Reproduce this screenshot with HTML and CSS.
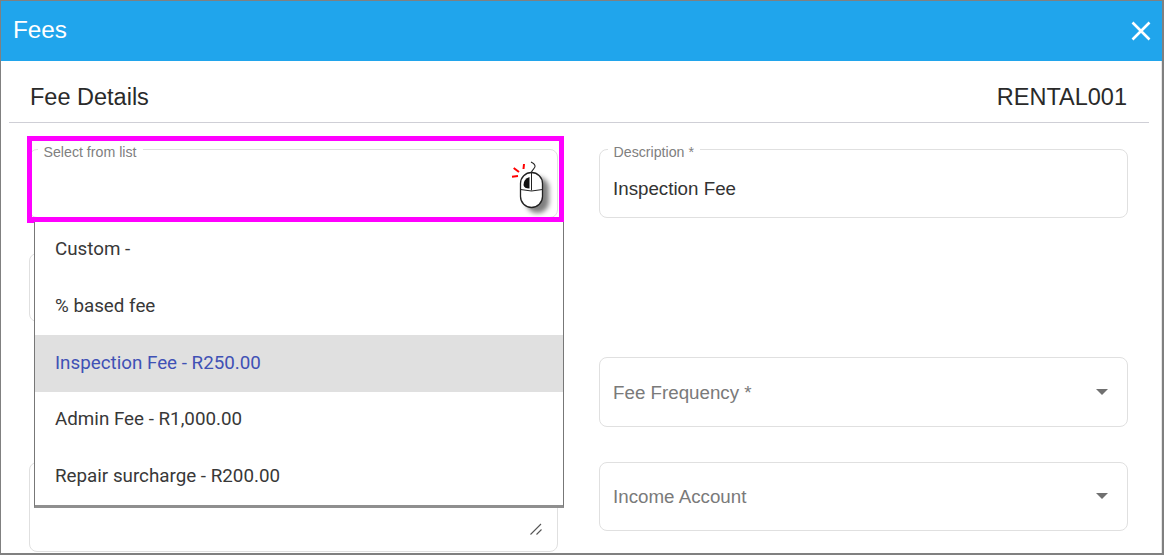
FILE: index.html
```html
<!DOCTYPE html>
<html lang="en">
<head>
<meta charset="utf-8">
<title>Fees</title>
<link rel="stylesheet" href="styles.css">
</head>
<body>
<div class="window">
  <header class="titlebar">
    <h1 class="title">Fees</h1>
    <svg class="close" width="20" height="20" viewBox="0 0 20 20" aria-label="Close"><path d="M1.5 1.5 18.5 18.5M18.5 1.5 1.5 18.5" stroke="#fff" stroke-width="2.6" fill="none"/></svg>
  </header>
  <main class="content">
    <div class="section-head">
      <h2 class="section-title">Fee Details</h2>
      <span class="section-title">RENTAL001</span>
    </div>
    <div class="form">
      <div class="field"><span class="legend">Select from list</span></div>
      <div class="field"><span class="legend">Description *</span><span class="value">Inspection Fee</span></div>
      <div class="field"></div>
      <div class="spacer"></div>
      <div class="spacer"></div>
      <div class="field select freq"><span class="placeholder">Fee Frequency *</span><span class="arrow"></span></div>
      <div class="field textarea">
        <svg class="grip" width="14" height="14" viewBox="0 0 14 14"><path d="M1.5 12.5 12 2M7.5 12.5 12.5 7.500" stroke="#555" stroke-width="1.1" fill="none"/></svg>
      </div>
      <div class="field select income"><span class="placeholder">Income Account</span><span class="arrow"></span></div>
    </div>
  </main>

  <div class="highlight"></div>

  <ul class="menu">
    <li class="option">Custom -</li>
    <li class="option">% based fee</li>
    <li class="option selected">Inspection Fee - R250.00</li>
    <li class="option">Admin Fee - R1,000.00</li>
    <li class="option">Repair surcharge - R200.00</li>
  </ul>

  <svg class="mouse" width="48" height="60" viewBox="0 0 48 60">
    <defs>
      <filter id="soft" x="-50%" y="-50%" width="200%" height="200%"><feGaussianBlur stdDeviation="2.6"/></filter>
    </defs>
    <rect x="14" y="16" width="23" height="36" rx="11.500" fill="#000" opacity=".5" filter="url(#soft)" transform="translate(3 3)"/>
    <rect x="11.500" y="14.500" width="22" height="35" rx="11" fill="#fff" stroke="#222" stroke-width="1.300"/>
    <path d="M11.500 31.500Q22.500 34.500 33.500 31.500M22.500 14.500V32.500" stroke="#222" stroke-width="1" fill="none"/>
    <path d="M20.500 19V30.500Q15 30.500 14.500 27Q14.500 21 20.500 19Z" fill="#111"/>
    <path d="M22.500 14.500C23 11 27 10 26 7.500C25.500 6 24 5 22 4" stroke="#222" stroke-width="1.100" fill="none"/>
    <path d="M3 18.700 9 18M4.700 10 10 14M15 6 14.500 11" stroke="#f00" stroke-width="2" fill="none"/>
  </svg>
</div>
</body>
</html>
```
FILE: styles.css
```css
* { box-sizing: border-box; }
html, body { margin: 0; padding: 0; }
body { width: 1164px; height: 555px; overflow: hidden; background: #fff; font-family: "Liberation Sans", Arial, sans-serif; color: #212121; }
.window { position: relative; width: 1164px; height: 555px; overflow: hidden; background: #fff; border: solid #808080; border-width: 1px 2px 2px 1px; box-shadow: inset -1px 0 0 #e6e6e6; }
.titlebar { height: 60px; background: #20a5ec; display: flex; align-items: center; justify-content: space-between; padding: 0 11px 0 12px; }
.title { margin: 0 0 2px; font-size: 24.300px; font-weight: 400; color: #fff; }
.close { display: block; }
.content { padding: 0 0 0 8px; }
.section-head { width: 1140px; height: 62px; padding: 12px 22px 0 21px; display: flex; justify-content: space-between; align-items: center; border-bottom: 1px solid #cfcfd6; }
.section-title { margin: 0; font-size: 23.500px; font-weight: 400; color: #2a2a2a; }
.form { display: grid; grid-template-columns: 529px 529px; grid-template-rows: 69px 69px 70px 90px; column-gap: 41px; row-gap: 35px; padding: 26px 0 0 20px; }
.field { position: relative; border: 1px solid #e0e0e0; border-radius: 8px; display: flex; align-items: center; justify-content: space-between; padding: 0 13px; background: #fff; }
.income { height: 69px; }
.legend { position: absolute; left: 7.500px; top: -5px; height: 14px; padding: 0 6px; background: #fff; font-size: 14.200px; line-height: 15px; color: #808080; }
.value { font-size: 18.750px; color: #333; margin-top: 10px; }
.placeholder { font-size: 18.750px; color: #7a7a7a; }
.freq .placeholder { margin-top: 2px; }
.arrow { width: 0; height: 0; margin-right: 6px; border: solid transparent; border-width: 6px 6px 0; border-top-color: #707070; }
.income .arrow { margin-bottom: 2px; }
.grip { position: absolute; right: 14px; bottom: 15px; }
.highlight { position: absolute; left: 26px; top: 135px; width: 537px; height: 87px; border: 5px solid #ff00ff; border-bottom-width: 6px; }
.menu { position: absolute; left: 33px; top: 221px; width: 530px; height: 286px; margin: 0; padding: 0; list-style: none; background: #fff; border: 1px solid #777; border-top: 0; border-bottom: 3px solid #8f8f8f; font-family: Roboto, sans-serif; font-size: 18.800px; color: #383838; }
.option { height: 56.500px; display: flex; align-items: center; padding: 0 20px 1px; }
.option:first-child { padding-bottom: 3px; }
.selected { background: #e0e0e0; color: #3f51b5; }
.mouse { position: absolute; left: 508px; top: 157px; }
```
